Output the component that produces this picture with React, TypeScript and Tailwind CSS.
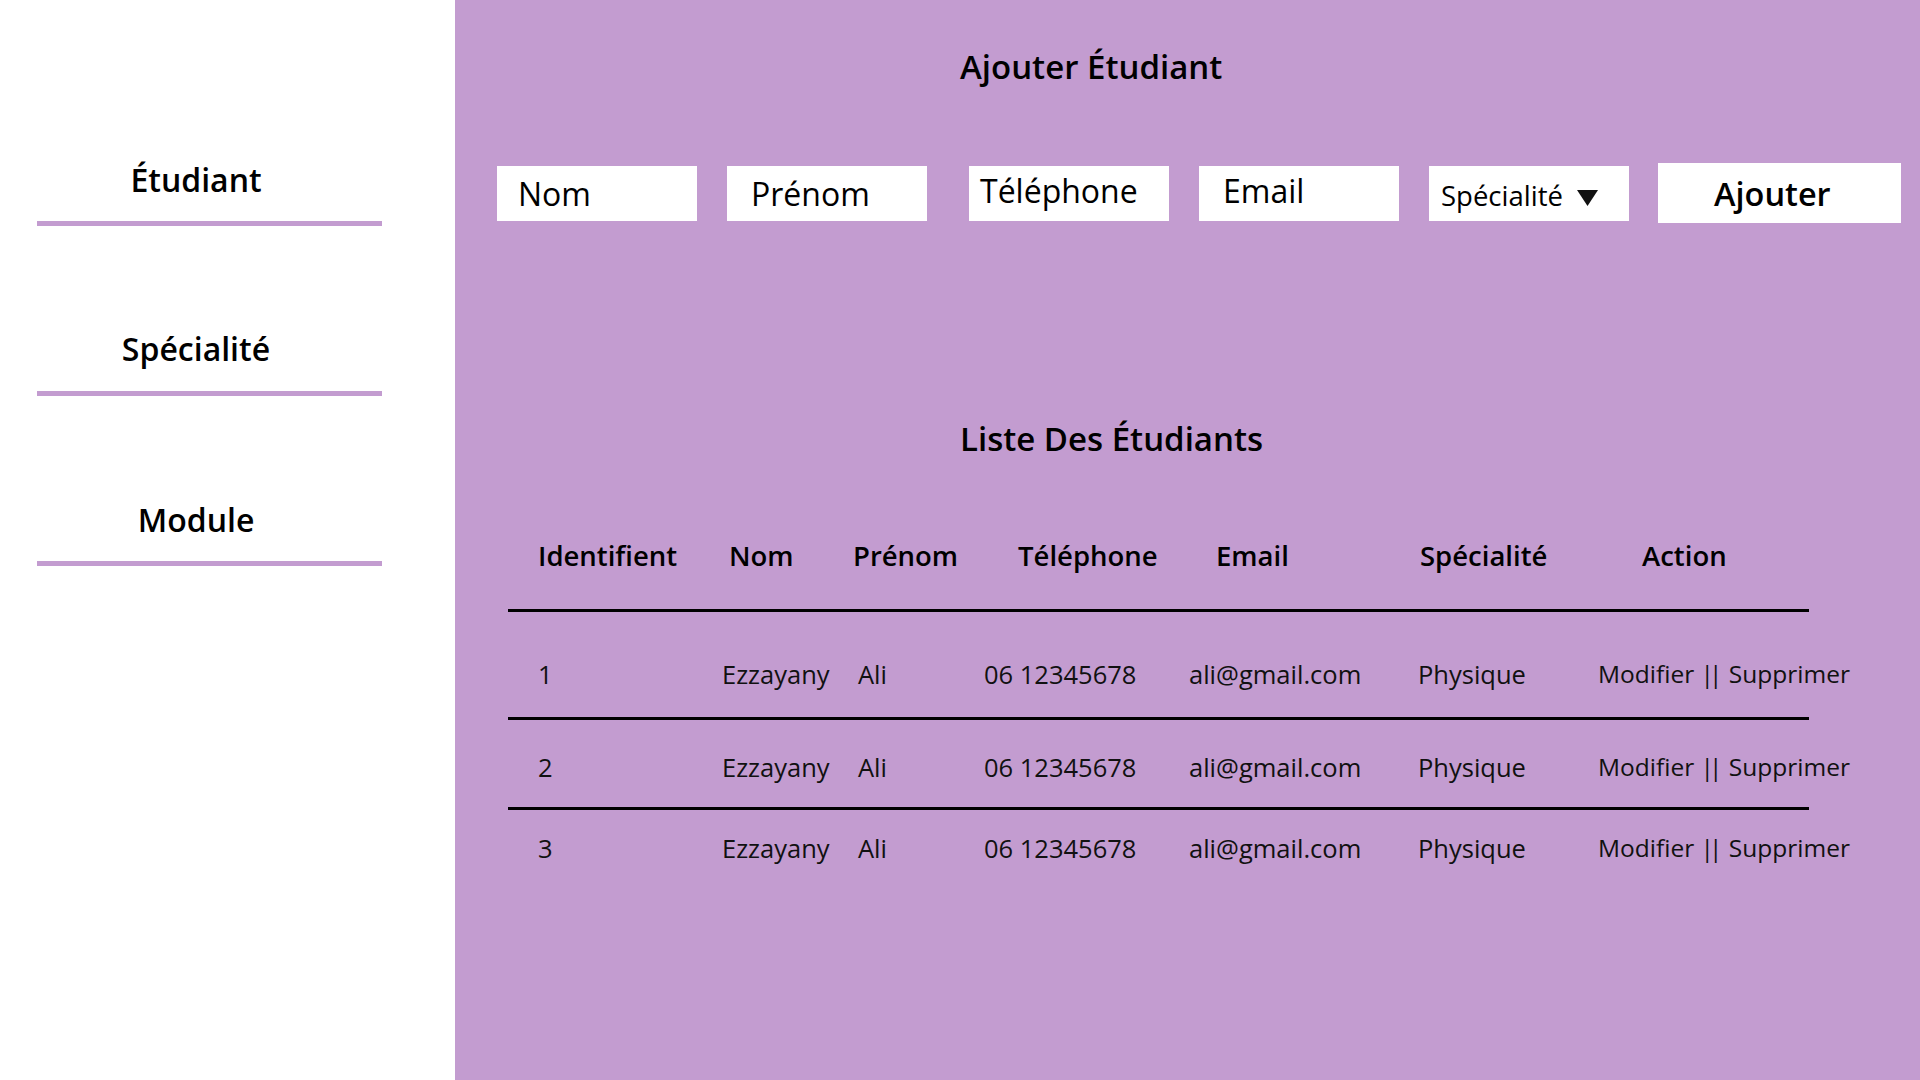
import React from "react";

const headers = [
  { label: "Identifient", w: "w-[191px]" },
  { label: "Nom", w: "w-[124px]" },
  { label: "Prénom", w: "w-[165px]" },
  { label: "Téléphone", w: "w-[198px]" },
  { label: "Email", w: "w-[204px]" },
  { label: "Spécialité", w: "w-[222px]" },
  { label: "Action", w: "w-[200px]" },
];

const rowWidths = [
  "w-[184px]",
  "w-[136px]",
  "w-[126px]",
  "w-[205px]",
  "w-[229px]",
  "w-[180px]",
  "w-[280px]",
];

const rows = [
  { id: "1", pt: "pt-[45px] h-[105px]" },
  { id: "2", pt: "pt-[30px] h-[87px]" },
  { id: "3", pt: "pt-[21px] h-[80px]" },
];

function Line() {
  return <div className="h-[3px] w-[1301px] bg-black" />;
}

export default function App() {
  const font = { fontFamily: "'Open Sans', 'Noto Sans', sans-serif" };
  return (
    <div className="flex h-[1080px] w-[1920px] overflow-hidden text-black" style={font}>
      <aside className="flex w-[455px] shrink-0 flex-col bg-white pt-[160px]">
        {["Étudiant", "Spécialité", "Module"].map((t, i) => (
          <div key={t} className={i === 0 ? "" : i === 1 ? "mt-[103px]" : "mt-[104px]"}>
            <div className="w-[392px] text-center text-[32px] font-semibold leading-[40px]">{t}</div>
            <div className={`${i === 1 ? "mt-[22px]" : "mt-[21px]"} ml-[37px] h-[5px] w-[345px] bg-[#c39cd0]`} />
          </div>
        ))}
      </aside>

      <main className="flex flex-1 flex-col bg-[#c39cd0] pt-[47px]">
        <h1 className="pl-[505px] text-[33px] font-semibold leading-[40px]">Ajouter Étudiant</h1>

        <div className="mt-[76px] flex items-start pl-[42px]">
          <div className="mt-[3px] flex h-[55px] w-[200px] items-center bg-white pl-[21px] text-[32px] font-normal leading-[55px]">
            Nom
          </div>
          <div className="ml-[30px] mt-[3px] flex h-[55px] w-[200px] items-center bg-white pl-[24px] text-[32px] font-normal leading-[55px]">
            Prénom
          </div>
          <div className="ml-[42px] mt-[3px] flex h-[55px] w-[200px] items-start bg-white pl-[11px] text-[32px] font-normal leading-[49px]">
            Téléphone
          </div>
          <div className="ml-[30px] mt-[3px] flex h-[55px] w-[200px] items-start bg-white pl-[24px] text-[32px] font-normal leading-[49px]">
            Email
          </div>
          <div className="ml-[30px] mt-[3px] flex h-[55px] w-[200px] items-center bg-white pl-[12px] text-[27.5px] font-normal leading-[55px]">
            <span className="pt-[3px]">Spécialité</span>
            <svg className="ml-[14px] mt-[8px]" width="21" height="16" viewBox="0 0 21 16">
              <polygon points="0,0 21,0 10.5,16" fill="#111" />
            </svg>
          </div>
          <button className="ml-[29px] h-[60px] w-[243px] bg-white pl-[56px] pt-[2px] text-left text-[32.5px] font-semibold leading-[58px]">
            Ajouter
          </button>
        </div>

        <h2 className="mt-[196px] pl-[505px] text-[33px] font-semibold leading-[40px]">Liste Des Étudiants</h2>

        <div className="mt-[79px] ml-[53px] flex flex-col">
          <div className="flex h-[71px] pl-[30px] text-[27.5px] font-semibold leading-[36px]">
            {headers.map((h) => (
              <div key={h.label} className={`${h.w} shrink-0`}>
                {h.label}
              </div>
            ))}
          </div>
          <Line />
          {rows.map((r, idx) => (
            <React.Fragment key={r.id}>
              <div className={`flex ${r.pt} pl-[30px] text-[25.5px] font-normal leading-[34px] text-[#111]`}>
                {[r.id, "Ezzayany", "Ali", "06 12345678", "ali@gmail.com", "Physique"].map((c, i) => (
                  <div key={i} className={`${rowWidths[i]} shrink-0 whitespace-nowrap`}>
                    {c}
                  </div>
                ))}
                <div className={`${rowWidths[6]} shrink-0 whitespace-nowrap text-[24.5px]`}>
                  Modifier <span className="tracking-[-5px]">|</span>| Supprimer
                </div>
              </div>
              {idx < 2 && <Line />}
            </React.Fragment>
          ))}
        </div>
      </main>
    </div>
  );
}
